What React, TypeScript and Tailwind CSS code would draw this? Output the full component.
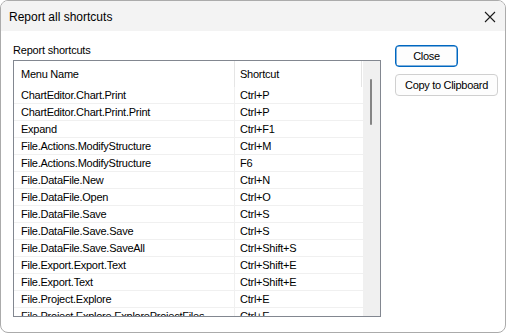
const rows: [string, string][] = [
  ["ChartEditor.Chart.Print", "Ctrl+P"],
  ["ChartEditor.Chart.Print.Print", "Ctrl+P"],
  ["Expand", "Ctrl+F1"],
  ["File.Actions.ModifyStructure", "Ctrl+M"],
  ["File.Actions.ModifyStructure", "F6"],
  ["File.DataFile.New", "Ctrl+N"],
  ["File.DataFile.Open", "Ctrl+O"],
  ["File.DataFile.Save", "Ctrl+S"],
  ["File.DataFile.Save.Save", "Ctrl+S"],
  ["File.DataFile.Save.SaveAll", "Ctrl+Shift+S"],
  ["File.Export.Export.Text", "Ctrl+Shift+E"],
  ["File.Export.Text", "Ctrl+Shift+E"],
  ["File.Project.Explore", "Ctrl+E"],
  ["File.Project.Explore.ExploreProjectFiles", "Ctrl+E"],
]

export default function App() {
  return (
    <div className="w-[506px] h-[333px] bg-white font-['Liberation_Sans',Arial,sans-serif] text-black">
      <div className="w-full h-full flex flex-col border border-[#ababab] rounded-lg overflow-hidden">
        {/* title bar */}
        <div className="h-[30px] bg-[#f3f3f3] flex items-center justify-between pl-[8px] pr-[9px] shrink-0">
          <span className="text-[12px] leading-[14px] pt-[1px]">Report all shortcuts</span>
          <svg width="12" height="12" viewBox="0 0 12 12" className="mt-[1px]">
            <path d="M1 1 L11 11 M11 1 L1 11" stroke="#1b1b1b" strokeWidth="1.1" />
          </svg>
        </div>

        <div className="flex-1 flex pl-[12px] pt-[13px]">
          <div className="w-[368px] flex flex-col">
            <div className="text-[11px] leading-[13px] tracking-[-0.2px]">Report shortcuts</div>
            <div className="mt-[3px] h-[257px] border border-[#828790] flex overflow-hidden">
              <div className="w-[349px] flex flex-col text-[11px] tracking-[-0.25px]">
                <div className="h-[26px] shrink-0 flex items-center">
                  <div className="w-[221px] h-full flex items-center pl-[7px] border-r border-[#e5e5e5]">Menu Name</div>
                  <div className="w-[127px] h-full flex items-center pl-[5px] border-r border-[#e5e5e5]">Shortcut</div>
                </div>
                {rows.map(([name, key], i) => (
                  <div key={i} className="h-[17px] shrink-0 flex border-b border-[#f0f0f0]">
                    <div className="w-[221px] flex items-center pl-[7px] border-r border-[#f0f0f0] whitespace-nowrap overflow-hidden">{name}</div>
                    <div className="w-[127px] flex items-center pl-[5px] whitespace-nowrap">{key}</div>
                  </div>
                ))}
              </div>
              <div className="w-[17px] bg-[#f0f0f0] pt-[18px] pl-[7px]">
                <div className="w-[2px] h-[46px] rounded-full bg-[#858585]" />
              </div>
            </div>
          </div>

          <div className="ml-[14px] pt-[1px] flex flex-col gap-[7px] text-[11px] tracking-[-0.3px]">
            <button className="w-[63px] h-[22px] rounded-[4px] border border-[#0067c0] bg-[#fdfdfd] flex items-center justify-center shadow-[inset_0_0_0_0.5px_#0067c0]">
              Close
            </button>
            <button className="w-[103px] h-[22px] rounded-[4px] border border-[#d0d0d0] bg-[#fdfdfd] flex items-center justify-center">
              Copy to Clipboard
            </button>
          </div>
        </div>
      </div>
    </div>
  )
}
